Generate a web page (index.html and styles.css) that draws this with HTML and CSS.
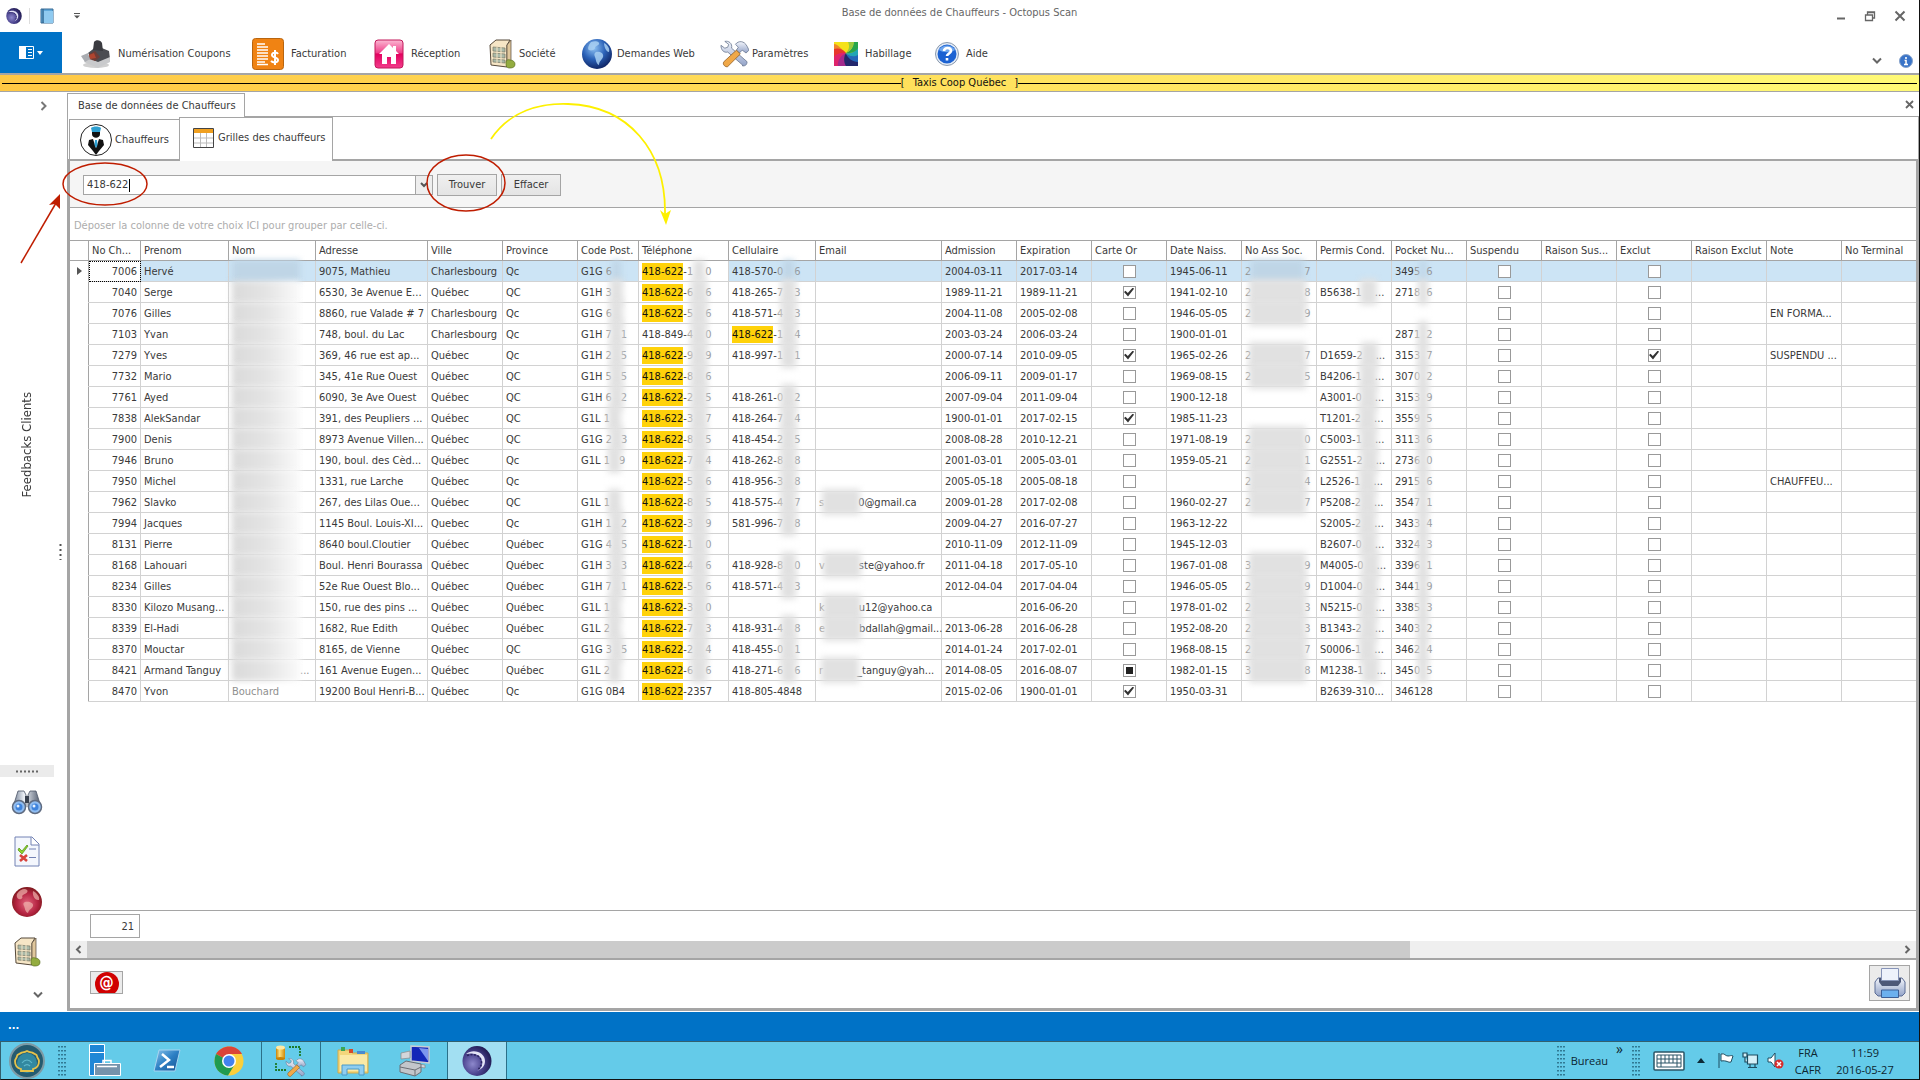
FILE: index.html
```html
<!DOCTYPE html>
<html lang="fr">
<head>
<meta charset="utf-8">
<title>Base de données de Chauffeurs - Octopus Scan</title>
<link rel="stylesheet" href="styles.css">
</head>
<body>
<svg class="defs" width="0" height="0" aria-hidden="true">
  <defs>
    <radialGradient id="gOcto" cx=".35" cy=".6" r=".7"><stop offset="0" stop-color="#8d88cc"/><stop offset=".5" stop-color="#4c4590"/><stop offset="1" stop-color="#1c164c"/></radialGradient>
    <radialGradient id="gGlobe" cx=".4" cy=".3" r=".75"><stop offset="0" stop-color="#8fc2f2"/><stop offset=".5" stop-color="#2b62b8"/><stop offset="1" stop-color="#0c1f5c"/></radialGradient>
    <radialGradient id="gRed" cx=".5" cy=".55" r=".6"><stop offset="0" stop-color="#e2647c"/><stop offset=".6" stop-color="#b32340"/><stop offset="1" stop-color="#6f1713"/></radialGradient>
    <linearGradient id="gPink" x1="0" y1="0" x2="0" y2="1"><stop offset="0" stop-color="#fbb9d3"/><stop offset=".45" stop-color="#f0408a"/><stop offset=".5" stop-color="#e3005f"/><stop offset="1" stop-color="#f23d8b"/></linearGradient>
    <linearGradient id="gMetal" x1="0" y1="0" x2="1" y2="0"><stop offset="0" stop-color="#6f7c90"/><stop offset=".4" stop-color="#eef2f8"/><stop offset="1" stop-color="#4a5568"/></linearGradient>
    <linearGradient id="gSteel" x1="0" y1="0" x2="0" y2="1"><stop offset="0" stop-color="#f2f5fb"/><stop offset="1" stop-color="#93a3c8"/></linearGradient>
    <linearGradient id="gPs" x1="0" y1="0" x2="1" y2="1"><stop offset="0" stop-color="#8bc3ea"/><stop offset=".5" stop-color="#2c7fc4"/><stop offset="1" stop-color="#17518f"/></linearGradient>
    <linearGradient id="gGold" x1="0" y1="0" x2="1" y2="0"><stop offset="0" stop-color="#c98206"/><stop offset=".4" stop-color="#ffe07a"/><stop offset="1" stop-color="#d08a0a"/></linearGradient>
    <symbol id="octo" viewBox="0 0 30 30">
      <ellipse cx="15" cy="15" rx="14.5" ry="15" fill="url(#gOcto)"/>
      <path d="M4 8C12 2 23 7 23 15c0 5-3 8-8 10 4-2 6-6 5-10C19 9 12 6 4 8z" fill="#e4e4f6"/>
      <path d="M5 9.500C13 7 19 10 19.500 16c0 3-1 5-3 7" fill="none" stroke="#2a235f" stroke-width="1.500" stroke-dasharray="2 1.500"/>
    </symbol>
    <symbol id="building" viewBox="0 0 28 30">
      <path d="M2 6 8 1h14l-3 5v22L3 26z" fill="#f6e6c6" stroke="#55493a"/>
      <path d="M19 6l4-5v20l-4 7z" fill="#e0c79c" stroke="#55493a" stroke-width=".7"/>
      <path d="M5 8l12 1v4L5 12zM5 14l12 1v4L5 18zM5 20l12 1v3L5 23z" fill="#a9b9a8" stroke="#7b7a66" stroke-width=".7"/>
      <path d="M9 8v16M13 8v17" stroke="#f6e6c6"/>
      <path d="M18 24c0-3 2-4 4-3 3 0 5 2 5 4 0 3-2 4-5 4s-4-1-4-5z" fill="#93ac3f" stroke="#5d7223" stroke-width=".7"/>
    </symbol>
    <symbol id="tools" viewBox="0 0 30 28">
      <path d="M24 26 8 12C4 13 1 10 1 5l4 3 3-1 1-3-4-3c4-1 8 2 7 7l16 14c0 3-2 5-5 4z" fill="url(#gSteel)" stroke="#64728c" stroke-width=".8"/>
      <path d="M16 4c3-4 9-4 12 2l2 4-3 3-4-3-3 3-3-3 2-3z" fill="url(#gSteel)" stroke="#64728c" stroke-width=".8"/>
      <path d="M17 10l4 4L8 27c-2 1-6-2-4-5z" fill="#f0a848" stroke="#8f5a1c" stroke-width=".8"/>
    </symbol>
    <symbol id="grip" viewBox="0 0 9 32">
      <path d="M1 1v32M4 1v32M7 1v32" stroke="#1c5870" stroke-width="1.400" stroke-dasharray="1.500 2.500"/>
    </symbol>
  </defs>
</svg>

<header class="titlebar">
  <div class="quick">
    <svg width="16" height="16"><use href="#octo"/></svg>
    <span class="quick-sep"></span>
    <button class="plain" aria-label="Journal"><svg width="14" height="16" viewBox="0 0 14 16"><path d="M1 1h12v14H1z" fill="#5fa9dc" stroke="#386a94"/><path d="M4 3h9v12H4z" fill="#8fcaf0"/><path d="M3 1v14" stroke="#2d587c"/></svg></button>
    <button class="plain quick-more" aria-label="Personnaliser"><svg width="6" height="6" viewBox="0 0 6 6"><path d="M0 .5h6" stroke="#555"/><path d="M0 2.500h6L3 5.500z" fill="#555"/></svg></button>
  </div>
  <h1 class="title">Base de données de Chauffeurs - Octopus Scan</h1>
  <div class="winbtns">
    <button class="plain" aria-label="Réduire"><svg width="10" height="12" viewBox="0 0 10 12"><path d="M1 8.500h8" stroke="#666" stroke-width="2"/></svg></button>
    <button class="plain" aria-label="Restaurer"><svg width="12" height="12" viewBox="0 0 12 12"><path d="M1.500 5h7v5.500h-7zM3.500 5V2h7v6H9M1.500 5h7M3.500 2.500h7" fill="none" stroke="#666" stroke-width="1.300"/></svg></button>
    <button class="plain" aria-label="Fermer"><svg width="12" height="12" viewBox="0 0 12 12"><path d="M1.500 1.500l9 9M10.500 1.500l-9 9" stroke="#666" stroke-width="2"/></svg></button>
  </div>
</header>

<nav class="ribbon">
  <button class="appbtn" aria-label="Menu de l'application"><svg width="24" height="14" viewBox="0 0 24 14"><path d="M.5.5h14v12H.5z" fill="none" stroke="#fff"/><path d="M0 0h7v13H0z" fill="#fff"/><path d="M9 3.500h4M9 6.500h4M9 9.500h4" stroke="#fff"/><path d="M18 5h6l-3 4z" fill="#fff"/></svg></button>
  <div class="menu">
    <button class="item"><svg width="31" height="30" viewBox="0 0 31 30"><ellipse cx="16" cy="26" rx="13" ry="3" fill="#d0d0d0"/><path d="M8 14l9-7 12 5 1 8-12 6z" fill="#4b4d52"/><path d="M14 3c2-3 7-2 8 1l1 8-10-1z" fill="#3a3b40"/><path d="M4 23l4-4 10 4 12-5v5l-12 6z" fill="#c9cacc"/><path d="M9 15l6-3 5 6-5 4-6-2z" fill="#6e3c36"/><path d="M9 16l5-2 2 5-6 1z" fill="#b0452f"/><path d="M1 17l7-3 2 6-5 3z" fill="#a9acb1"/></svg>Numérisation Coupons</button>
    <button class="item"><svg width="32" height="32" viewBox="0 0 32 32"><rect x=".5" y=".5" width="31" height="31" rx="3" fill="#f08313" stroke="#b8650f"/><path d="M5 6h8M5 9h11M5 12h11M5 15h11M5 18h11M5 21h11M5 24h8M5 26.500h11" stroke="#fff" stroke-width="1.500"/><path d="M26 16c-1-2-6-2-6 1s6 2 6 5-5 3-7 1M23 12v15" fill="none" stroke="#fff" stroke-width="2"/></svg>Facturation</button>
    <button class="item"><svg width="30" height="30" viewBox="0 0 30 30"><rect x="1" y="1" width="28" height="28" rx="3" fill="url(#gPink)" stroke="#c2185b"/><path d="M15 5 5 15h3v10h5v-7h4v7h5V15h3l-3-3V7h-3v2z" fill="#fff"/></svg>Réception</button>
    <button class="item tight"><svg width="28" height="30"><use href="#building"/></svg>Société</button>
    <button class="item tight"><svg width="32" height="32" viewBox="0 0 32 32"><circle cx="15" cy="16" r="15" fill="url(#gGlobe)"/><path d="M9 4c5-2 9 0 8 2s-4 2-4 4-4 3-6 2 0-6 2-8zM14 14c5-1 8 2 7 5s-4 4-4 8c-3-1-3-6-4-8s-1-4 1-5zM22 5c4 2 6 6 5 9-3 0-5-6-5-9z" fill="#a9d0f2" opacity=".85"/></svg>Demandes Web</button>
    <button class="item tight"><svg width="29" height="28"><use href="#tools"/></svg>Paramètres</button>
    <button class="item"><svg width="24" height="24" viewBox="0 0 24 24"><path fill="#f5e21a" d="M0 0h24v24H0z"/><path d="M12 11C8 8 4 2 0 2v9c4-2 8-2 12 0z" fill="#f0872a"/><path d="M12 11C8 6 3 6 0 7v9c3-4 7-5 12-5z" fill="#e8372c"/><path d="M12 11C7 10 2 12 0 15v9h5c0-5 3-10 7-13z" fill="#e0246b"/><path d="M12 11C7 13 3 19 4 24h9c-3-5-3-9-1-13z" fill="#a32a8c"/><path d="M12 11c-3 4-2 10 0 13h12v-6c-6 0-10-3-12-7z" fill="#23276c"/><path d="M12 11c1 5 7 9 12 9v-8c-4 2-9 2-12-1z" fill="#2467b8"/><path d="M12 11c3 4 9 4 12 2V5c-2 4-7 7-12 6z" fill="#21a6b5"/><path d="M12 11c5 1 11-2 12-5V0h-5c1 4-2 9-7 11z" fill="#27a54c"/><path d="M12 11c5-2 8-7 8-11h-6c2 4 1 8-2 11z" fill="#9aca3c"/></svg>Habillage</button>
    <button class="item"><svg width="24" height="24" viewBox="0 0 24 24"><circle cx="12" cy="12" r="11.500" fill="#e4ecf6" stroke="#8a99ad"/><circle cx="12" cy="12" r="9.500" fill="#1c62d2"/><path d="M4 8c3-6 13-6 16 0-4 3-12 3-16 0z" fill="#6ea6ee"/><path d="M9 9c0-4 7-4 7 0 0 2-4 3-4 5M12 16v2.500" fill="none" stroke="#fff" stroke-width="2.600"/></svg>Aide</button>
  </div>
  <div class="ribbon-end">
    <button class="plain" aria-label="Réduire le ruban"><svg width="10" height="8" viewBox="0 0 10 8"><path d="M1 1.500l4 4 4-4" fill="none" stroke="#666" stroke-width="2"/></svg></button>
    <button class="plain" aria-label="Information"><svg width="14" height="14" viewBox="0 0 14 14"><circle cx="7" cy="7" r="6.500" fill="#3a74c8" stroke="#88a4cc"/><path d="M7 3v2M5.500 6.500H7V10M5 10.500h4" stroke="#fff" stroke-width="1.600"/></svg></button>
  </div>
</nav>

<div class="banner"><span class="rule"></span><span>[</span><span class="banner-name">Taxis Coop Québec</span><span>]</span><span class="rule"></span></div>

<div class="body">
  <aside class="rail">
    <button class="plain rail-open" aria-label="Développer"><svg width="8" height="10" viewBox="0 0 8 10"><path d="M1.500 1l4 4-4 4" fill="none" stroke="#777" stroke-width="2"/></svg></button>
    <div class="rail-label"><span>Feedbacks Clients</span></div>
    <div class="rail-grip"><svg width="24" height="3" viewBox="0 0 24 3"><path d="M1 1.500h24" stroke="#666" stroke-width="2" stroke-dasharray="2 2"/></svg></div>
    <button class="railbtn" aria-label="Rechercher"><svg width="32" height="26" viewBox="0 0 32 26"><path d="M7 2h6l2 4v12H2zM19 2h6l5 16H17V6z" fill="url(#gMetal)" stroke="#4c5668" stroke-width=".8"/><path d="M14 7h4v7h-4z" fill="#39414f"/><circle cx="8" cy="18" r="6.500" fill="#8fbcf0" stroke="#5f6b80" stroke-width="1.500"/><circle cx="24" cy="18" r="6.500" fill="#8fbcf0" stroke="#5f6b80" stroke-width="1.500"/><circle cx="8" cy="18" r="3.500" fill="#3f83dc"/><circle cx="24" cy="18" r="3.500" fill="#3f83dc"/><circle cx="7" cy="17" r="1.500" fill="#e6f2ff"/><circle cx="23" cy="17" r="1.500" fill="#e6f2ff"/></svg></button>
    <button class="railbtn" aria-label="Liste de contrôle"><svg width="26" height="32" viewBox="0 0 26 32"><path d="M1 1h17l7 7v22H1z" fill="#f4f7fd" stroke="#7382b4"/><path d="M17 1v8h8" fill="#fff" stroke="#7382b4"/><path d="M5 12l3 3 5-6 1 1-6 8-4-4z" fill="#8fd32c" stroke="#4d8c12" stroke-width=".7"/><path d="M6 19l7 6M13 19l-7 6" stroke="#d8433c" stroke-width="2.600"/><path d="M15 13h7M15 21.500h7" stroke="#7382b4"/></svg></button>
    <button class="railbtn" aria-label="Web"><svg width="32" height="32" viewBox="0 0 32 32"><circle cx="16" cy="16" r="15" fill="url(#gRed)"/><path d="M6 8c3-5 8-6 10-4s-2 4-4 5 1 3-2 4-5-2-4-5zM14 16c4-1 9 1 8 4s-4 3-5 7c-3-1-3-5-4-7s-1-3 1-4zM22 5c4 2 7 6 6 9-4 1-7-5-6-9z" fill="#f0b5ae" opacity=".7"/></svg></button>
    <button class="railbtn" aria-label="Société"><svg width="28" height="30"><use href="#building"/></svg></button>
    <button class="plain rail-more" aria-label="Plus"><svg width="10" height="8" viewBox="0 0 10 8"><path d="M1 1.500l4 4 4-4" fill="none" stroke="#666" stroke-width="2"/></svg></button>
  </aside>
  <div class="splitter"><svg width="3" height="16" viewBox="0 0 3 16"><path d="M1.500 0v16" stroke="#555" stroke-width="2" stroke-dasharray="2 3"/></svg></div>

  <main class="workspace">
    <div class="doctabs">
      <button class="doctab">Base de données de Chauffeurs</button>
      <div class="doctabs-rest"><button class="plain" aria-label="Fermer l'onglet"><svg width="9" height="9" viewBox="0 0 9 9"><path d="M1 1l7 7M8 1L1 8" stroke="#666" stroke-width="1.800"/></svg></button></div>
    </div>
    <div class="subtabs">
      <button class="subtab"><svg width="34" height="34" viewBox="0 0 34 34"><circle cx="17" cy="17" r="15.500" fill="#fff" stroke="#222"/><path d="M13 8h8v3c0 5-8 5-8 0z" fill="#111"/><path d="M12 5c2-2 8-2 10 0l-1 4h-8z" fill="#2d9fd0"/><path d="M10 17l4-1 3 9 3-9 4 1 1 5-5 6-3 4-3-4-5-6z" fill="#111"/><path d="M16 17h2l.5 5-1.500 3-1.500-3z" fill="#2d9fd0"/></svg>Chauffeurs</button>
      <button class="subtab active"><svg width="21" height="20" viewBox="0 0 21 20"><path d="M.5.5h20v19H.5z" fill="#fff" stroke="#444"/><path d="M1 1h19v4H1z" fill="#f0a020"/><path d="M1 10h19M1 15h19M7.500 5v14M13.500 5v14" stroke="#bbb"/></svg>Grilles des chauffeurs</button>
    </div>
    <section class="frame">
      <div class="find">
        <div class="combo"><input class="combo-text" type="text" value="418-622" aria-label="Rechercher"><span class="caret"></span><button class="combo-drop" aria-label="Historique"><svg width="8" height="6" viewBox="0 0 8 6"><path d="M1 1l3 3 3-3" fill="none" stroke="#555" stroke-width="2"/></svg></button></div>
        <button class="btn">Trouver</button>
        <button class="btn">Effacer</button>
      </div>
      <div class="groupby">Déposer la colonne de votre choix ICI pour grouper par celle-ci.</div>
      <div class="gridwrap">
        <table class="grid">
          <colgroup><col class="c19"><col class="c52"><col class="c88"><col class="c87"><col class="c112"><col class="c75"><col class="c75"><col class="c61"><col class="c90"><col class="c87"><col class="c126"><col class="c75" span="13"></colgroup>
          <thead><tr><th></th><th>No Ch...</th><th>Prenom</th><th>Nom</th><th>Adresse</th><th>Ville</th><th>Province</th><th>Code Post.</th><th>Téléphone</th><th>Cellulaire</th><th>Email</th><th>Admission</th><th>Expiration</th><th>Carte Or</th><th>Date Naiss.</th><th>No Ass Soc.</th><th>Permis Cond.</th><th>Pocket Nu...</th><th>Suspendu</th><th>Raison Sus...</th><th>Exclut</th><th>Raison Exclut</th><th>Note</th><th>No Terminal</th></tr></thead>
          <tbody id="rows"></tbody>
        </table>
      </div>
      <div class="summary"><output class="count">21</output></div>
      <div class="hscroll">
        <button class="arrow" aria-label="Défiler à gauche"><svg width="7" height="9" viewBox="0 0 7 9"><path d="M5.500 1L2 4.500 5.500 8" fill="none" stroke="#666" stroke-width="2"/></svg></button>
        <div class="track"><div class="thumb"></div></div>
        <button class="arrow" aria-label="Défiler à droite"><svg width="7" height="9" viewBox="0 0 7 9"><path d="M1.500 1L5 4.500 1.500 8" fill="none" stroke="#666" stroke-width="2"/></svg></button>
      </div>
      <div class="actions">
        <button class="mail" aria-label="Courriel"><span class="at">@</span></button>
        <button class="print" aria-label="Imprimer"><svg width="32" height="32" viewBox="0 0 32 32"><path d="M4 11h24l3 4v11l-3 3H4l-3-3V15z" fill="url(#gSteel)" stroke="#5b6c96"/><path d="M5 11h22v4l-3 4H8l-3-4z" fill="#4d5878"/><path d="M7.500 1.500h17v12h-17z" fill="#eef2fb" stroke="#8794b8"/><path d="M7.500 23h17v7.500h-17z" fill="#6cb0ee" stroke="#3d5f96"/></svg></button>
      </div>
    </section>
  </main>
</div>

<footer class="status">...</footer>

<div class="taskbar">
  <button class="start" aria-label="Démarrer"><svg width="36" height="36" viewBox="0 0 36 36"><circle cx="18" cy="18" r="17" fill="#245b70" stroke="#7d9aa4" stroke-width="2"/><circle cx="18" cy="20" r="10" fill="#3288a0"/><path d="M12 28v-2c-4-1-6-4-6-8 0-2 2-3 2-5s3-2 4-3 3 0 6-2c3 2 5 1 6 2s4 1 4 3 2 3 2 5c0 4-2 7-6 8v2z" fill="none" stroke="#e6c24a" stroke-width="1.800"/><path d="M13 20c3-4 7-4 10 0M15 23c2-2 4-2 6 0" fill="none" stroke="#5fb8cc" stroke-width="1.200"/></svg></button>
  <svg class="grip" width="9" height="32"><use href="#grip"/></svg>
  <div class="apps">
    <button class="task" aria-label="Gestionnaire de serveur"><svg width="32" height="33" viewBox="0 0 32 33"><path d="M.5.5h15v31H.5z" fill="#1f87d6" stroke="#fff"/><path d="M.5 8.500h15" stroke="#fff"/><path d="M5.500 19.500h26v12h-26z" fill="#7593ab" stroke="#fff"/><path d="M14 19v-2.500h8V19M8 22.500h20" fill="none" stroke="#fff" stroke-width="1.500"/></svg></button>
    <button class="task" aria-label="PowerShell"><svg width="28" height="24" viewBox="0 0 28 24"><path d="M6 1h21l-5 21H1z" fill="url(#gPs)" stroke="#a8d4f0"/><path d="M9 5l7 6-9 7M14 18h7" fill="none" stroke="#fff" stroke-width="2.500"/></svg></button>
    <button class="task" aria-label="Chrome"><svg width="30" height="30" viewBox="0 0 30 30"><circle cx="15" cy="15" r="14.500" fill="#fbcf3b"/><path d="M15 15 2 8C8-2 23-2 28 8H15z" fill="#db4437"/><path d="M2 8c-4 9 0 20 12 21.500L21 18l-6-3z" fill="#209a50"/><circle cx="15" cy="15" r="7" fill="#fff"/><circle cx="15" cy="15" r="5.500" fill="#4382f0"/></svg></button>
    <button class="task open" aria-label="Outils de base de données"><svg width="32" height="32" viewBox="0 0 32 32"><path d="M1 2h9v12H1z" fill="url(#gGold)"/><ellipse cx="5.500" cy="2.500" rx="4.500" ry="2" fill="#ffe9a6"/><ellipse cx="5.500" cy="13.500" rx="4.500" ry="1.500" fill="#c98206"/><path d="M14 2h11v10M1 18v7h11" fill="none" stroke="#1c7a2a" stroke-width="1.800" stroke-dasharray="2 1"/><svg x="9" y="13" width="23" height="19"><use href="#tools"/></svg></svg></button>
    <button class="task" aria-label="Explorateur"><svg width="32" height="32" viewBox="0 0 32 32"><path d="M1 5h12l2 3h16v20H1z" fill="#f3d67b" stroke="#cfa94a"/><path d="M4 2h4v4H4z" fill="#3aa655"/><path d="M12 4h4v4h-4z" fill="#d34a2c"/><path d="M20 6h8v3h-8z" fill="#4a8ad0"/><path d="M3 10h27v16H3z" fill="#fbe9a6"/><path d="M5 30V20h22v10h-5v-6H10v6z" fill="#8fcdf0" stroke="#4a9ac8"/></svg></button>
    <button class="task" aria-label="Poste de travail"><svg width="32" height="32" viewBox="0 0 32 32"><path d="M12 1l18 1v16l-18-2z" fill="#1426b8" stroke="#c9ccd2" stroke-width="1.500"/><path d="M20 3l9 1v12z" fill="#7d95ee"/><path d="M2 8l9-2v7l-9 1zM14 18l12 2v3l-12-2z" fill="#d4d6da" stroke="#888" stroke-width=".7"/><path d="M1 20l6-4 15 3v8l-6 4-15-4z" fill="#c3c6cb" stroke="#6b6e74"/><path d="M1 22l15 3 6-3M16 25v6" fill="none" stroke="#6b6e74"/></svg></button>
    <button class="task open current" aria-label="Octopus Scan"><svg width="30" height="30"><use href="#octo"/></svg></button>
  </div>
  <div class="tray">
    <svg class="grip" width="9" height="32"><use href="#grip"/></svg>
    <span class="desk">Bureau</span><span class="more">»</span>
    <svg class="grip" width="9" height="32"><use href="#grip"/></svg>
    <svg class="kbd" width="32" height="20" viewBox="0 0 32 20"><rect x="1" y="1" width="30" height="18" rx="1" fill="#fff" stroke="#2a5566" stroke-width="1.500"/><path d="M4 4h24v12H4zM4 8h24M4 12h24M8 4v8M12 4v8M16 4v8M20 4v8M24 4v12M8 12v4" fill="none" stroke="#2a5566"/></svg>
    <svg class="up" width="8" height="5" viewBox="0 0 8 5"><path d="M4 0l4 5H0z" fill="#0d2a36"/></svg>
    <svg class="ti" width="17" height="17" viewBox="0 0 17 17"><path d="M2 1v15M4 2c4-1 4 2 7 2 2 0 3-1 5 0l-2 6c-3 1-4-2-10-1z" fill="#fff" stroke="#1d4c60"/></svg>
    <svg class="ti" width="17" height="17" viewBox="0 0 17 17"><path d="M5.500 3h10v9h-10zM8 12v3M13 12v3M6 15.500h9M1 1h4v4H1zM3 5v5h3" fill="#d5f0f8" stroke="#1d4c60" stroke-width="1.200"/></svg>
    <svg class="ti" width="17" height="17" viewBox="0 0 17 17"><path d="M1 6h3l4-5v14l-4-5H1z" fill="#fff" stroke="#1d4c60"/><circle cx="12" cy="12" r="4.500" fill="#d62b2b"/><path d="M10 10l4 4M14 10l-4 4" stroke="#fff" stroke-width="1.500"/></svg>
    <div class="stack lang"><span>FRA</span><span>CAFR</span></div>
    <div class="stack clock"><time>11:59</time><time>2016-05-27</time></div>
  </div>
</div>

<svg class="notes" width="700" height="280" viewBox="0 0 700 280" aria-hidden="true">
  <g fill="none" stroke="#bf1d00" stroke-width="1.500">
    <ellipse cx="105" cy="184" rx="42" ry="21"/>
    <ellipse cx="466" cy="183" rx="39" ry="28"/>
    <path d="M21 263 56 203"/>
  </g>
  <path d="M60 194 49 205l6-1 5 5z" fill="#bf1d00"/>
  <path d="M491 139C510 111 540 103 568 104 628 106 666 150 665 214" fill="none" stroke="#fdf000" stroke-width="1.800"/>
  <path d="M660 210l5 4 6-4-5 15z" fill="#fdf000"/>
</svg>
<script src="grid.js"></script>
</body>
</html>
```
FILE: styles.css
```css
* { box-sizing: border-box; }

body {
  margin: 0;
  min-height: 100vh;
  display: flex;
  flex-direction: column;
  position: relative;
  background: #fff;
  border-right: 1px solid #111;
  color: #3a3a3a;
  font: 11px/14px "DejaVu Sans Condensed", "Noto Sans", sans-serif;
}

button, input { font: inherit; color: inherit; margin: 0; }
svg { display: block; flex: none; }
.defs { position: absolute; }
.plain { border: 0; padding: 0; background: none; }

/* Title bar */
.titlebar {
  display: grid;
  grid-template-columns: 1fr auto 1fr;
  height: 32px;
}
.quick { display: flex; align-items: center; gap: 10px; padding-left: 6px; }
.quick-sep { width: 1px; height: 16px; margin-left: -3px; background: #ddd; }
.quick-more { margin-left: 10px; }
.title { margin: 0; padding-top: 6px; font-size: 11px; line-height: 14px; font-weight: 400; color: #666; }
.winbtns { display: flex; justify-content: flex-end; align-items: center; gap: 18px; padding-right: 13px; }

/* Ribbon */
.ribbon { display: flex; height: 43px; border-bottom: 2px solid #a5a5a5; }
.appbtn {
  display: grid;
  place-items: center;
  flex: none;
  width: 62px;
  height: 41px;
  padding: 0;
  border: 0;
  background: #0072c6;
}
.menu {
  flex: 1;
  display: grid;
  grid-template-columns: 172px 122px 114px 94px 138px 114px 101px auto;
  justify-content: start;
  padding: 2px 0 0 18px;
}
.item {
  display: flex;
  align-items: center;
  gap: 7px;
  padding: 0;
  border: 0;
  background: none;
  white-space: nowrap;
}
.item.tight { gap: 3px; }
.ribbon-end { display: flex; align-items: flex-end; gap: 17px; padding: 0 6px 4px 0; }
.ribbon-end .plain { height: 16px; display: grid; place-items: center; }

.banner {
  display: flex;
  align-items: center;
  height: 17px;
  padding: 0 2px;
  border-bottom: 1px solid #a5a5a5;
  background: linear-gradient(90deg, #ffc844, #fffa76);
  color: #111;
}
.banner-name { padding: 0 8px; }
.rule { flex: 1; height: 1px; background: #000; }

/* Left rail */
.body { flex: 1; display: flex; min-height: 0; }
.rail { flex: none; width: 54px; display: flex; flex-direction: column; }
.rail-open { height: 28px; padding-left: 40px; }
.rail-label { flex: 1; display: grid; place-items: center; padding-top: 4px; font-size: 13px; line-height: 16px; }
.rail-label span { writing-mode: vertical-rl; transform: rotate(180deg); }
.rail-grip { display: grid; place-items: center; height: 12px; background: #ebebeb; }
.railbtn { height: 50px; display: grid; place-items: center; padding: 0; border: 0; background: none; }
.rail-more { height: 35px; padding-left: 33px; }
.splitter { flex: none; width: 13px; padding-right: 1px; display: grid; place-items: center; }

/* Document tabs */
.workspace { flex: 1; min-width: 0; display: flex; flex-direction: column; padding: 1px 0; }
.doctabs { display: flex; height: 24px; }
.doctab {
  width: 178px;
  padding: 0 0 0 10px;
  border: 1px solid #a5a5a5;
  border-bottom: 0;
  background: #fff;
  text-align: left;
  white-space: nowrap;
}
.doctabs-rest {
  flex: 1;
  display: flex;
  justify-content: flex-end;
  align-items: center;
  padding-right: 5px;
  border-bottom: 1px solid #a5a5a5;
}
.subtabs {
  display: flex;
  align-items: flex-end;
  height: 42px;
  padding-left: 1px;
  border-left: 1px solid #a5a5a5;
  border-right: 1px solid #a5a5a5;
}
.subtab {
  display: flex;
  align-items: center;
  gap: 2px;
  width: 110px;
  height: 40px;
  padding: 0 0 0 9px;
  border: 1px solid #a5a5a5;
  border-width: 1px 0 0 1px;
  background: #fff;
  white-space: nowrap;
}
.subtab.active {
  position: relative;
  gap: 4px;
  width: 154px;
  height: 44px;
  margin-bottom: -2px;
  padding: 0 0 3px 13px;
  border-right-width: 1px;
}

.frame {
  flex: 1;
  display: flex;
  flex-direction: column;
  border: 3px solid #a5a5a5;
  border-top-width: 2px;
}

/* Search panel */
.find {
  display: flex;
  align-items: center;
  gap: 4px;
  height: 47px;
  padding: 1px 0 0 13px;
  border-bottom: 1px solid #a5a5a5;
  background: #f5f5f5;
}
.combo { position: relative; display: flex; width: 350px; height: 20px; border: 1px solid #a5a5a5; background: #fff; }
.combo-text { flex: 1; min-width: 0; padding: 0 3px; border: 0; background: none; outline: 0; }
.combo-drop { width: 17px; padding: 0; display: grid; place-items: center; border: 0; border-left: 1px solid #a5a5a5; background: #eee; }
.caret { position: absolute; left: 45px; top: 3px; width: 1px; height: 13px; background: #000; }
.btn { width: 60px; height: 22px; padding: 0; border: 1px solid #a5a5a5; background: linear-gradient(#f0f0f0, #e4e4e4); }

.groupby { height: 32px; padding: 11px 0 0 4px; color: #adadad; }

/* Data grid */
.gridwrap { flex: 1; overflow: hidden; }
.grid { width: 1847px; table-layout: fixed; border-collapse: separate; border-spacing: 0; }
.c19 { width: 19px; }
.c52 { width: 52px; }
.c61 { width: 61px; }
.c75 { width: 75px; }
.c87 { width: 87px; }
.c88 { width: 88px; }
.c90 { width: 90px; }
.c112 { width: 112px; }
.c126 { width: 126px; }
.grid th, .grid td {
  height: 21px;
  padding: 0 0 0 3px;
  overflow: hidden;
  white-space: nowrap;
  text-align: left;
  font-weight: 400;
  line-height: 18px;
}
.grid th { border: solid #a5a5a5; border-width: 1px 1px 1px 0; }
.grid td { padding-top: 1px; border: solid #d2d2d2; border-width: 0 1px 1px 0; }
.grid td.mark { padding: 0; border-bottom-color: transparent; border-right-color: #a5a5a5; }
.grid td.num { padding-right: 3px; text-align: right; }
.grid td.masked { overflow: visible; }
.grid td.check { padding: 0; }
.selected td { background: #cce4f5; }
.selected td.mark, .selected td.found { background: #fff; }
.grid .selected td.num { background: #fff; outline: 1px dotted #000; outline-offset: -1px; }
.pointer { display: block; width: 5px; height: 8px; margin-left: 7px; background: #555; clip-path: polygon(0 0, 100% 50%, 0 100%); }
mark { background: #ffd20a; color: #111; padding: 2px 0; }
.box {
  appearance: none;
  display: grid;
  place-items: center;
  width: 13px;
  height: 13px;
  margin: 0 auto;
  border: 1px solid #999;
  background: #fff;
}
.box:checked::after { content: ""; width: 10px; height: 9px; background: #333; clip-path: polygon(0 50%, 15% 35%, 38% 62%, 88% 0, 100% 15%, 40% 100%); }
.box:indeterminate::after { content: ""; width: 7px; height: 7px; background: #222; }

/* Masked personal data */
.faint { color: #8f8f8f; }
.smudge {
  display: inline-block;
  height: 22px;
  margin: -3px 0 -2px;
  vertical-align: middle;
  background: #e1e1e1;
  box-shadow: 0 0 0 2px #e1e1e1;
  filter: blur(3px);
}
.s-code { width: 9px; }
.s-tel { width: 12px; }
.s-cell { width: 11px; }
.s-mail { width: 34px; }
.s-nas { width: 53px; }
.s-permis { width: 13px; }
.s-pocket { width: 6px; }
.s-nom { width: 68px; background: linear-gradient(90deg, #dadada, #e4e4e4 50%, #fafafa); box-shadow: none; }
.selected .smudge { background: #bfd5e6; box-shadow: none; }
.selected .found .smudge { background: #e1e1e1; }

/* Grid footer */
.summary { height: 31px; padding: 3px 0 0 20px; border-top: 1px solid #a5a5a5; }
.count { display: block; width: 50px; height: 24px; padding-right: 5px; border: 1px solid #a5a5a5; line-height: 23px; text-align: right; }
.hscroll { display: flex; height: 17px; background: #efefef; }
.arrow { display: grid; place-items: center; width: 17px; padding: 0; border: 0; background: none; }
.track { flex: 1; }
.thumb { width: 73%; height: 100%; background: #cbcbcb; }
.actions {
  display: flex;
  justify-content: space-between;
  align-items: center;
  height: 50px;
  padding: 0 6px 3px 20px;
  border-top: 2px solid #a5a5a5;
}
.mail, .print { display: grid; place-items: center; padding: 0; border: 1px solid #a5a5a5; background: #ebebeb; overflow: hidden; }
.mail { width: 33px; height: 23px; }
.at {
  width: 24px;
  height: 24px;
  border-radius: 50%;
  background: #d00000;
  color: #fff;
  font-size: 16px;
  font-weight: 700;
  line-height: 22px;
  text-align: center;
}
.print { width: 41px; height: 36px; }

.status { height: 29px; padding: 7px 8px; background: #0072c6; color: #fff; font-weight: 700; }

/* Taskbar */
.taskbar {
  display: flex;
  align-items: center;
  height: 39px;
  border: solid #33606e;
  border-width: 1px 0 1px 1px;
  border-bottom-color: #111;
  background: #64cbe9;
  color: #0c2530;
  font: 11px/17px "Open Sans", "Noto Sans", sans-serif;
}
.start { margin: 0 13px 0 8px; padding: 0; border: 0; background: none; }
.apps { display: flex; align-self: stretch; padding-left: 8px; }
.task { display: grid; place-items: center; width: 60px; margin-right: 2px; padding: 0; border: 0; background: none; }
.task.open { border: solid #2b7089; border-width: 0 1px; }
.task.current { background: #a2dff2; }
.tray { display: flex; align-items: center; margin-left: auto; padding-right: 24px; }
.desk { padding: 0 8px 0 5px; }
.more { padding: 0 9px 24px 0; font-size: 14px; }
.kbd { margin: 0 12px; }
.up { margin-right: 12px; }
.ti { margin-right: 8px; }
.stack { display: flex; flex-direction: column; text-align: center; }
.lang { width: 32px; }
.clock { width: 60px; margin-left: 11px; }

.notes { position: absolute; left: 0; top: 0; pointer-events: none; }
```
FILE: grid.js
```js
// Columns: no, prénom, adresse, ville, province, code postal, téléphone, cellulaire,
// courriel, admission, expiration, carte or, naissance, NAS, permis, pocket, exclut, note.
// "~" stands for the masked part of a value.
const drivers = `
7006;Hervé;9075, Mathieu;Charlesbourg;Qc;G1G 6~;418-622-1~0;418-570-0~6;;2004-03-11;2017-03-14;0;1945-06-11;2~7;;3495~6;0;
7040;Serge;6530, 3e Avenue E...;Québec;QC;G1H 3~;418-622-6~6;418-265-7~3;;1989-11-21;1989-11-21;1;1941-02-10;2~8;B5638-1~...;2718~6;0;
7076;Gilles;8860, rue Valade # 7;Charlesbourg;Qc;G1G 6~;418-622-5~6;418-571-4~3;;2004-11-08;2005-02-08;0;1946-05-05;2~9;;;0;EN FORMA...
7103;Yvan;748, boul. du Lac;Charlesbourg;Qc;G1H 7~1;418-849-4~0;418-622-1~4;;2003-03-24;2006-03-24;0;1900-01-01;;;2871~2;0;
7279;Yves;369, 46 rue est ap...;Québec;Qc;G1H 2~5;418-622-9~9;418-997-1~1;;2000-07-14;2010-09-05;1;1965-02-26;2~7;D1659-2~...;3153~7;1;SUSPENDU ...
7732;Mario;345, 41e Rue Ouest;Québec;QC;G1H 5~5;418-622-8~6;;;2006-09-11;2009-01-17;0;1969-08-15;2~5;B4206-1~...;3070~2;0;
7761;Ayed;6090, 3e Ave Ouest;Québec;QC;G1H 6~2;418-622-2~5;418-261-0~2;;2007-09-04;2011-09-04;0;1900-12-18;;A3001-0~...;3153~9;0;
7838;AlekSandar;391, des Peupliers ...;Québec;QC;G1L 1~;418-622-3~7;418-264-7~4;;1900-01-01;2017-02-15;1;1985-11-23;;T1201-2~...;3559~5;0;
7900;Denis;8973 Avenue Villen...;Québec;QC;G1G 2~3;418-622-8~5;418-454-2~5;;2008-08-28;2010-12-21;0;1971-08-19;2~0;C5003-1~...;3113~6;0;
7946;Bruno;190, boul. des Cèd...;Québec;Qc;G1L 1~9;418-622-7~4;418-262-8~8;;2001-03-01;2005-03-01;0;1959-05-21;2~1;G2551-2~...;2736~0;0;
7950;Michel;1331, rue Larche;Québec;Qc;;418-622-5~6;418-956-3~8;;2005-05-18;2005-08-18;0;;2~4;L2526-1~...;2915~6;0;CHAUFFEU...
7962;Slavko;267, des Lilas Oue...;Québec;QC;G1L 1~;418-622-8~5;418-575-4~7;s~0@gmail.ca;2009-01-28;2017-02-08;0;1960-02-27;2~7;P5208-2~...;3547~1;0;
7994;Jacques;1145 Boul. Louis-XI...;Quebec;Qc;G1H 1~2;418-622-3~9;581-996-7~8;;2009-04-27;2016-07-27;0;1963-12-22;;S2005-2~...;3433~4;0;
8131;Pierre;8640 boul.Cloutier;Québec;Québec;G1G 4~5;418-622-1~0;;;2010-11-09;2012-11-09;0;1945-12-03;;B2607-0~...;3324~3;0;
8168;Lahouari;Boul. Henri Bourassa;Québec;Québec;G1H 3~3;418-622-4~6;418-928-8~0;v~ste@yahoo.fr;2011-04-18;2017-05-10;0;1967-01-08;3~9;M4005-0~...;3396~1;0;
8234;Gilles;52e Rue Ouest Blo...;Québec;Québec;G1H 7~1;418-622-5~6;418-571-4~3;;2012-04-04;2017-04-04;0;1946-05-05;2~9;D1004-0~...;3441~9;0;
8330;Kilozo Musang...;150, rue des pins ...;Québec;Québec;G1L 1~;418-622-3~0;;k~u12@yahoo.ca;;2016-06-20;0;1978-01-02;2~3;N5215-0~...;3385~3;0;
8339;El-Hadi;1682, Rue Edith;Québec;Québec;G1L 2~;418-622-7~3;418-931-4~8;e~bdallah@gmail...;2013-06-28;2016-06-28;0;1952-08-20;2~3;B1343-2~...;3403~2;0;
8370;Mouctar;8165, de Vienne;Québec;QC;G1G 3~5;418-622-2~4;418-455-0~1;;2014-01-24;2017-02-01;0;1968-08-15;2~7;S0006-1~...;3462~4;0;
8421;Armand Tanguy;161 Avenue Eugen...;Québec;Québec;G1L 2~;418-622-6~6;418-271-6~6;r~_tanguy@yah...;2014-08-05;2016-08-07;2;1982-01-15;3~8;M1238-1~...;3450~5;0;
8470;Yvon;19200 Boul Henri-B...;Québec;Qc;G1G 0B4;418-622-2357;418-805-4848;;2015-02-06;1900-01-01;1;1950-03-31;;B2639-310...;346128;0;`
  .trim().split("\n").map(line => line.split(";"));

const query = "418-622";

function value(text, kind) {
  const [head, tail] = text.split("~");
  const shown = head.replace(query, `<mark>${query}</mark>`);
  if (tail === undefined) return `<td>${shown}</td>`;
  // the character beside the mask is half faded
  const start = shown.slice(0, -1) + `<span class="faint">${shown.slice(-1)}</span>`;
  const end = kind === "mail" || kind === "permis" ? tail : `<span class="faint">${tail}</span>`;
  const found = kind === "tel" ? " found" : "";
  return `<td class="masked${found}">${start}<span class="smudge s-${kind}"></span>${end}</td>`;
}

function check(state, label) {
  return `<td class="check"><input class="box" type="checkbox" aria-label="${label}"${state === "1" ? " checked" : ""}${state === "2" ? " data-mixed" : ""}></td>`;
}

document.getElementById("rows").innerHTML = drivers.map((d, i) => {
  const last = i === drivers.length - 1;
  const nom = last
    ? `<td><span class="faint">Bouchard</span></td>`
    : `<td class="masked"><span class="smudge s-nom"></span>${d[0] === "8421" ? `<span class="faint">...</span>` : ""}</td>`;
  return `<tr${i === 0 ? ' class="selected"' : ""}>
    <td class="mark">${i === 0 ? '<span class="pointer"></span>' : ""}</td>
    <td class="num">${d[0]}</td>${value(d[1])}${nom}${value(d[2])}${value(d[3])}${value(d[4])}
    ${value(d[5], "code")}${value(d[6], "tel")}${value(d[7], "cell")}${value(d[8], "mail")}
    ${value(d[9])}${value(d[10])}${check(d[11], "Carte Or")}${value(d[12])}${value(d[13], "nas")}
    ${value(d[14], "permis")}${value(d[15], "pocket")}${check("0", "Suspendu")}<td></td>
    ${check(d[16], "Exclut")}<td></td>${value(d[17])}<td></td></tr>`;
}).join("");

document.querySelectorAll("[data-mixed]").forEach(box => { box.indeterminate = true; });
```
